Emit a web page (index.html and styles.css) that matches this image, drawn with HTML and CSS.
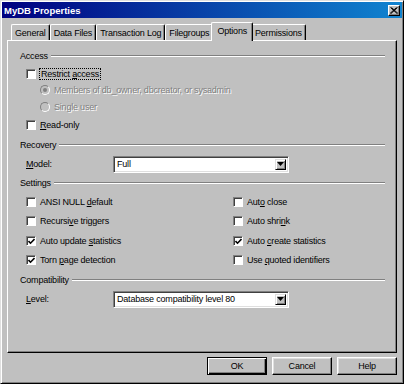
FILE: index.html
```html
<!DOCTYPE html>
<html>
<head>
<meta charset="utf-8">
<title>MyDB Properties</title>
<link rel="stylesheet" href="styles.css">
</head>
<body>
<div class="window">
  <div class="titlebar">
    <span class="title">MyDB Properties</span>
    <span class="close"><svg width="8" height="7" viewBox="0 0 8 7"><path d="M0.5 0.5 L7 6.5 M1.5 0.5 L8 6.5 M6.5 0.5 L0 6.5 M7.5 0.5 L1 6.5" stroke="#000" stroke-width="1" fill="none"/></svg></span>
  </div>
  <div class="client">
    <div class="tabs">
      <div class="tab">General</div>
      <div class="tab">Data Files</div>
      <div class="tab">Transaction Log</div>
      <div class="tab">Filegroups</div>
      <div class="tab active">Options</div>
      <div class="tab">Permissions</div>
    </div>
    <div class="panel">
      <div class="group-head h-access"><span>Access</span><i class="etch"></i></div>
      <div class="row r-restrict"><span class="check"></span><span class="lbl focus">Restrict <u>a</u>ccess</span></div>
      <div class="row r-radio"><span class="radio on"></span><span class="lbl disabled">Members of db_owner, dbcreator, or sysadmin</span></div>
      <div class="row r-radio2"><span class="radio"></span><span class="lbl disabled">Single user</span></div>
      <div class="row r-readonly"><span class="check"></span><span class="lbl"><u>R</u>ead-only</span></div>

      <div class="group-head h-recovery"><span>Recovery</span><i class="etch"></i></div>
      <div class="field r-model"><span class="flabel"><u>M</u>odel:</span><div class="combo"><span class="val">Full</span><span class="arrow"><svg width="7" height="4" viewBox="0 0 7 4"><path d="M0 0 H7 L3.5 4 Z" fill="#000"/></svg></span></div></div>

      <div class="group-head h-settings"><span>Settings</span><i class="etch"></i></div>
      <div class="settings">
        <div class="row"><span class="check"></span><span class="lbl">ANSI NULL <u>d</u>efault</span></div>
        <div class="row"><span class="check"></span><span class="lbl">Aut<u>o</u> close</span></div>
        <div class="row"><span class="check"></span><span class="lbl">Recursi<u>v</u>e triggers</span></div>
        <div class="row"><span class="check"></span><span class="lbl">Auto shri<u>n</u>k</span></div>
        <div class="row"><span class="check checked"><svg width="7" height="7" viewBox="0 0 7 7"><path d="M0.5 3 L2.5 5.2 L6.5 1" stroke="#000" stroke-width="1.6" fill="none"/></svg></span><span class="lbl">Auto update <u>s</u>tatistics</span></div>
        <div class="row"><span class="check checked"><svg width="7" height="7" viewBox="0 0 7 7"><path d="M0.5 3 L2.5 5.2 L6.5 1" stroke="#000" stroke-width="1.6" fill="none"/></svg></span><span class="lbl">Auto <u>c</u>reate statistics</span></div>
        <div class="row"><span class="check checked"><svg width="7" height="7" viewBox="0 0 7 7"><path d="M0.5 3 L2.5 5.2 L6.5 1" stroke="#000" stroke-width="1.6" fill="none"/></svg></span><span class="lbl">Torn <u>p</u>age detection</span></div>
        <div class="row"><span class="check"></span><span class="lbl">Use <u>q</u>uoted identifiers</span></div>
      </div>

      <div class="group-head h-compat"><span>Compatibility</span><i class="etch"></i></div>
      <div class="field r-level"><span class="flabel"><u>L</u>evel:</span><div class="combo"><span class="val">Database compatibility level 80</span><span class="arrow"><svg width="7" height="4" viewBox="0 0 7 4"><path d="M0 0 H7 L3.5 4 Z" fill="#000"/></svg></span></div></div>
    </div>
    <div class="buttons">
      <div class="btn default">OK</div>
      <div class="btn">Cancel</div>
      <div class="btn">Help</div>
    </div>
  </div>
</div>
</body>
</html>
```

FILE: styles.css
```css
html, body {
  margin: 0;
  padding: 0;
  background: #c0c0c0;
}
body {
  font-family: "Liberation Sans", Arial, sans-serif;
  font-size: 9px;
  letter-spacing: -0.2px;
  color: #000;
}
.window {
  width: 404px;
  height: 384px;
  box-sizing: border-box;
  background: #c0c0c0;
  border: 1px solid;
  border-color: #dfdfdf #000 #000 #dfdfdf;
  padding: 1px;
  box-shadow: inset 1px 1px #fff, inset -1px -1px #808080;
}
.titlebar {
  height: 16px;
  display: flex;
  align-items: center;
  justify-content: space-between;
  padding: 0 2px 0 2px;
  background: linear-gradient(to right, #000080, #1084d0);
}
.title {
  color: #fff;
  font-weight: bold;
  font-size: 9.5px;
  letter-spacing: 0;
}
.close {
  width: 12px;
  height: 11px;
  box-sizing: border-box;
  background: #c0c0c0;
  border: 1px solid;
  border-color: #fff #000 #000 #fff;
  box-shadow: inset -1px -1px #808080;
  display: flex;
  align-items: center;
  justify-content: center;
}
.close svg { display: block; }
.client {
  padding: 4px 5px 0 5px;
}
.tabs {
  display: flex;
  align-items: flex-end;
  height: 18px;
  padding-left: 4px;
}
.tab {
  height: 16px;
  box-sizing: border-box;
  padding: 0 3px;
  border-top: 1px solid #fff;
  border-left: 1px solid #fff;
  border-right: 1px solid #000;
  box-shadow: inset -1px 0 #808080;
  border-radius: 2px 2px 0 0;
  display: flex;
  align-items: center;
  white-space: nowrap;
}
.tab.active {
  height: 19px;
  margin: 0 -2px -1px -2px;
  padding: 0 5px 2px 5px;
  background: #c0c0c0;
  position: relative;
  z-index: 1;
}
.panel {
  height: 313px;
  box-sizing: border-box;
  border: 1px solid;
  border-color: #fff #000 #000 #fff;
  box-shadow: inset -1px -1px #808080;
  padding: 5px 11px 0 12px;
  display: flex;
  flex-direction: column;
}
.group-head {
  display: flex;
  align-items: center;
  gap: 3px;
  height: 19px;
}
.etch {
  flex: 1;
  height: 0;
  border-top: 1px solid #808080;
  border-bottom: 1px solid #fff;
}
.h-settings { height: 18px; }
.row {
  display: flex;
  align-items: center;
  gap: 4px;
  margin-left: 6px;
}
.r-restrict { height: 17px; }
.r-radio, .r-radio2 { height: 16px; margin-left: 20px; }
.r-radio2 { height: 17px; }
.r-readonly { height: 20px; }
.check {
  width: 10px;
  height: 10px;
  box-sizing: border-box;
  background: #fff;
  border: 1px solid;
  border-color: #808080 #fff #fff #808080;
  box-shadow: inset 1px 1px #404040;
  display: flex;
  align-items: center;
  justify-content: center;
  flex: none;
}
.check svg { display: block; margin: 1px 0 0 1px; }
.radio {
  width: 10px;
  height: 10px;
  box-sizing: border-box;
  border-radius: 50%;
  border: 1px solid;
  border-color: #808080 #fff #fff #808080;
  background: #c0c0c0;
  display: flex;
  align-items: center;
  justify-content: center;
  flex: none;
}
.radio.on::after {
  content: "";
  width: 4px;
  height: 4px;
  border-radius: 50%;
  background: #808080;
}
.lbl { white-space: nowrap; }
.focus {
  outline: 1px dotted #000;
  outline-offset: 0;
  padding: 0 1px;
}
.disabled {
  color: #808080;
  text-shadow: 1px 1px 0 #fff;
}
.field {
  display: flex;
  align-items: center;
  height: 20px;
  margin-left: 6px;
}
.flabel {
  width: 87px;
  flex: none;
}
.combo {
  width: 176px;
  height: 17px;
  box-sizing: border-box;
  background: #fff;
  border: 1px solid;
  border-color: #808080 #fff #fff #808080;
  box-shadow: inset 1px 1px #404040, inset -1px -1px #dfdfdf;
  display: flex;
  align-items: center;
  padding: 2px;
}
.combo .val {
  flex: 1;
  padding-left: 1px;
  white-space: nowrap;
}
.combo .arrow {
  width: 11px;
  height: 11px;
  box-sizing: border-box;
  background: #c0c0c0;
  border: 1px solid;
  border-color: #dfdfdf #000 #000 #dfdfdf;
  box-shadow: inset 1px 1px #fff, inset -1px -1px #808080;
  display: flex;
  align-items: center;
  justify-content: center;
}
.combo .arrow svg { display: block; }
.settings {
  display: grid;
  grid-template-columns: 207px 1fr;
  grid-auto-rows: 19.5px;
  margin-left: 6px;
}
.settings .row { margin-left: 0; }
.buttons {
  display: flex;
  justify-content: flex-end;
  gap: 5px;
  padding-top: 4px;
}
.btn {
  width: 60px;
  height: 18px;
  box-sizing: border-box;
  border: 1px solid;
  border-color: #fff #000 #000 #fff;
  box-shadow: inset -1px -1px #808080, inset 1px 1px #dfdfdf;
  display: flex;
  align-items: center;
  justify-content: center;
}
.btn.default {
  border-color: #000;
  box-shadow: inset 1px 1px #fff, inset -1px -1px #000, inset -2px -2px #808080;
}
```
